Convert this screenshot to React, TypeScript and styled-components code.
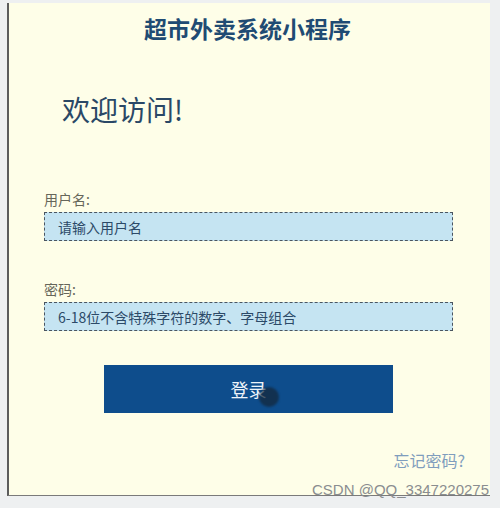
import styled, { createGlobalStyle } from "styled-components";

const GlobalStyle = createGlobalStyle`
  html, body {
    margin: 0;
    padding: 0;
    background: #eef0f1;
    font-family: "Liberation Sans", "Noto Sans CJK SC", sans-serif;
  }
`;

const Page = styled.div`
  width: 500px;
  height: 508px;
  padding-top: 3px;
  padding-left: 7px;
  box-sizing: border-box;
`;

const Panel = styled.div`
  position: relative;
  width: 483px;
  height: 493px;
  box-sizing: border-box;
  background: #fefee8;
  border-left: 2px solid #5c5c5c;
  border-bottom: 1px solid #7a7a7a;
  padding-top: 12px;
  display: flex;
  flex-direction: column;
`;

const Title = styled.h1`
  margin: 0;
  text-align: center;
  font-size: 23px;
  line-height: 27px;
  font-weight: 700;
  color: #1f4b73;
  font-family: "Noto Sans CJK SC", sans-serif;
  padding-right: 4px;
`;

const Welcome = styled.h2`
  margin: 51px 0 0 53px;
  font-size: 28px;
  line-height: 32px;
  font-weight: 400;
  color: #2a4866;
  font-family: "Noto Sans CJK SC", sans-serif;
`;

const Form = styled.div`
  padding: 0 37px 0 35px;
  display: flex;
  flex-direction: column;
`;

const Label = styled.label<{ $top: number }>`
  margin-top: ${(p) => p.$top}px;
  font-size: 14px;
  line-height: 18px;
  color: #66665a;
  font-family: "Noto Sans CJK SC", sans-serif;
`;

const Input = styled.input`
  margin-top: 4px;
  height: 29px;
  box-sizing: border-box;
  background: #c5e4f2;
  border: 1px dashed #4a5560;
  padding: 0 13px;
  font-size: 14px;
  font-family: "Noto Sans CJK SC", sans-serif;
  outline: none;
  &::placeholder {
    color: #2c4a68;
  }
`;

const Button = styled.button`
  position: relative;
  margin: 34px auto 0;
  width: 289px;
  height: 48px;
  border: none;
  background: #0e4d8c;
  color: #eef4fa;
  font-size: 18px;
  font-family: "Noto Sans CJK SC", sans-serif;
  cursor: pointer;
`;

const Cursor = styled.span`
  position: absolute;
  left: 155px;
  top: 22px;
  width: 20px;
  height: 20px;
  border-radius: 50%;
  background: rgba(20, 40, 60, 0.75);
  filter: blur(1px);
`;

const Forgot = styled.a`
  align-self: flex-end;
  margin: 38px 25px 0 0;
  font-size: 16px;
  line-height: 18px;
  color: #7f9dbd;
  font-family: "Noto Sans CJK SC", sans-serif;
  cursor: pointer;
`;

const Watermark = styled.span`
  position: absolute;
  right: 1px;
  bottom: -3px;
  font-size: 15px;
  line-height: 17px;
  color: #8a8d90;
  font-family: "Liberation Sans", sans-serif;
`;

function App() {
  return (
    <>
      <GlobalStyle />
      <Page>
        <Panel>
          <Title>超市外卖系统小程序</Title>
          <Welcome>欢迎访问!</Welcome>
          <Form>
            <Label $top={65}>用户名:</Label>
            <Input placeholder="请输入用户名" />
            <Label $top={39}>密码:</Label>
            <Input type="password" placeholder="6-18位不含特殊字符的数字、字母组合" />
            <Button>
              登录
              <Cursor />
            </Button>
          </Form>
          <Forgot>忘记密码?</Forgot>
          <Watermark>CSDN @QQ_3347220275</Watermark>
        </Panel>
      </Page>
    </>
  );
}

export default App;
